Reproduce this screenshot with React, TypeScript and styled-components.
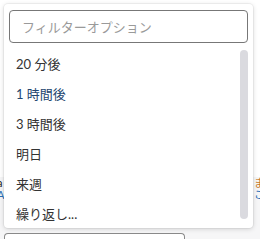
import React from 'react';
import styled, { createGlobalStyle } from 'styled-components';

const GlobalStyle = createGlobalStyle`
  html, body {
    margin: 0;
    padding: 0;
    background: #ffffff;
  }
  body {
    font-family: "Lato", "Noto Sans CJK JP", sans-serif;
    color: #333333;
    -webkit-font-smoothing: antialiased;
  }
`;

const Page = styled.div`
  position: relative;
  width: 260px;
  height: 239px;
  overflow: hidden;
  display: flex;
  flex-direction: column;
`;

const TopArea = styled.div`
  height: 177px;
  background: #ffffff;
`;

const Backdrop = styled.div`
  flex: 1;
  background: #f6f6f7;
  display: flex;
  flex-direction: column;
`;

const BehindRow = styled.div`
  display: flex;
  justify-content: space-between;
  font-size: 11px;
  line-height: 12px;
  height: 12px;
  white-space: nowrap;
`;

const BehindText = styled.span<{ $color: string; $shift: number }>`
  color: ${(p) => p.$color};
  margin-left: ${(p) => (p.$shift < 0 ? `${p.$shift}px` : 0)};
  margin-right: ${(p) => (p.$shift > 0 ? `-${p.$shift}px` : 0)};
`;

const Spacer = styled.div`
  flex: 1;
`;

const BottomBox = styled.div`
  margin-left: 4px;
  width: 179px;
  height: 5px;
  border: 1px solid #8a8a8a;
  border-bottom: none;
  border-radius: 4px 4px 0 0;
  background: #ffffff;
`;

const Popover = styled.div`
  position: absolute;
  left: 4px;
  top: 4px;
  width: 249px;
  height: 224px;
  box-sizing: border-box;
  background: #ffffff;
  border-radius: 4px;
  box-shadow: 0 0 0 1px rgba(0, 0, 0, 0.04), 0 1px 5px rgba(0, 0, 0, 0.16);
  padding: 6px 5px 0 5px;
  display: flex;
  flex-direction: column;
`;

const FilterInput = styled.input`
  box-sizing: border-box;
  width: 100%;
  height: 33px;
  border: 1px solid #777777;
  border-radius: 4px;
  padding: 0 12px;
  font-family: "Lato", "Noto Sans CJK JP", sans-serif;
  font-size: 13px;
  color: #333333;
  outline: none;

  &::placeholder {
    color: #9a9a9a;
  }
`;

const ListArea = styled.div`
  flex: 1;
  display: flex;
  margin: 7px -5px 0 -5px;
  min-height: 0;
`;

const Items = styled.ul`
  flex: 1;
  list-style: none;
  margin: -2px 0 0 0;
  padding: 0;
  overflow: hidden;
`;

const Item = styled.li<{ $active?: boolean }>`
  height: 30px;
  display: flex;
  align-items: center;
  padding-left: 12px;
  font-size: 13px;
  color: ${(p) => (p.$active ? '#23466f' : '#333333')};
  white-space: nowrap;
`;

const Track = styled.div`
  width: 8px;
  padding: 0 5px 9px 0;
  display: flex;
`;

const Thumb = styled.div`
  flex: 1;
  background: #dadadf;
  border-radius: 4px;
`;

const options = ['20 分後', '1 時間後', '3 時間後', '明日', '来週', '繰り返し...'];

const App: React.FC = () => {
  return (
    <>
      <GlobalStyle />
      <Page>
        <TopArea />
        <Backdrop>
          <BehindRow>
            <BehindText $color="#222222" $shift={-3}>a</BehindText>
            <BehindText $color="#c87a2a" $shift={5}>ま</BehindText>
          </BehindRow>
          <BehindRow>
            <BehindText $color="#2c6fb8" $shift={-3}>A</BehindText>
            <BehindText $color="#2c6fb8" $shift={5}>こ</BehindText>
          </BehindRow>
          <Spacer />
          <BottomBox />
        </Backdrop>
        <Popover>
          <FilterInput placeholder="フィルターオプション" />
          <ListArea>
            <Items>
              {options.map((o, i) => (
                <Item key={o} $active={i === 1}>
                  {o}
                </Item>
              ))}
            </Items>
            <Track>
              <Thumb />
            </Track>
          </ListArea>
        </Popover>
      </Page>
    </>
  );
};

export default App;
